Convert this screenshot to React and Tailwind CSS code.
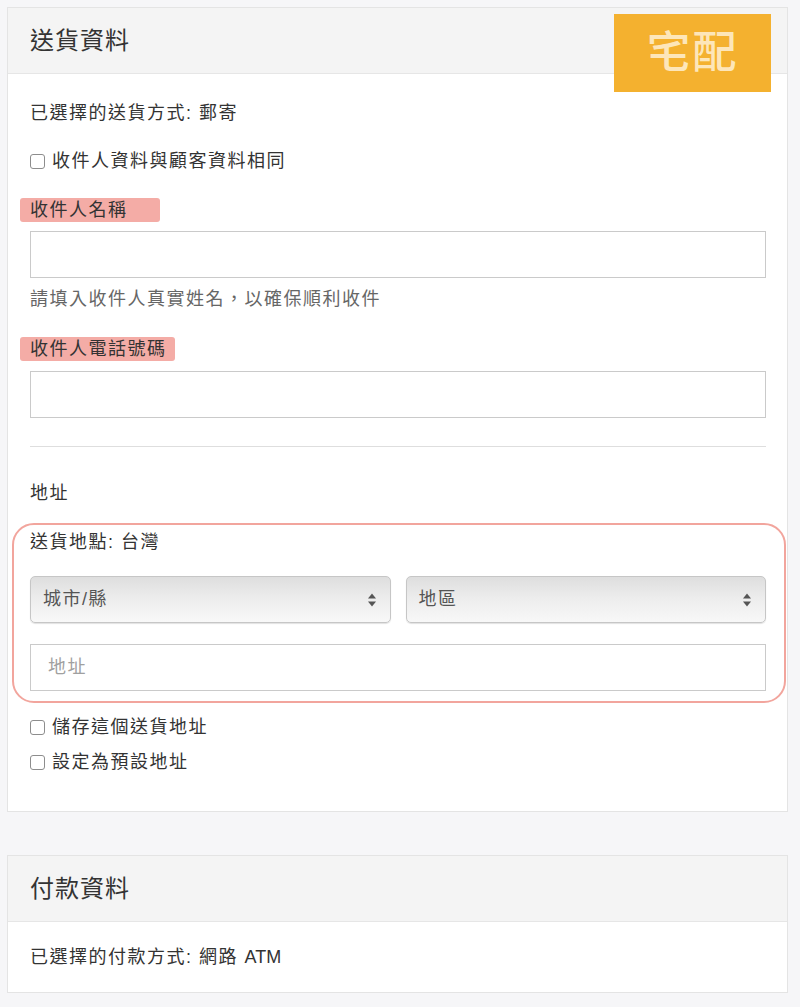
import React from 'react';

const font = "font-['Liberation_Sans','Noto_Sans_CJK_TC',sans-serif]";

const Checkbox = ({ label, className = '' }) => (
    <label className={`flex items-center h-[27px] ${className}`}>
        <span className="w-[15px] h-[15px] rounded-[3px] border border-[#8d8d8d] bg-white shrink-0" />
        <span className="ml-[7px] text-[18px] tracking-[1.5px] text-[#333]">{label}</span>
    </label>
);

// brush-stroke style marker behind the label
const Highlight = ({ children, className = '', pad = 'pr-[12px]' }) => (
    <div className={`h-[27px] flex items-center ${className}`}>
        <span className={`inline-block -ml-[10px] pl-[10px] ${pad} h-[24px] leading-[24px] bg-[#f4aca6] rounded-[3px] text-[18px] tracking-[1.5px] text-[#333]`}>
            {children}
        </span>
    </div>
);

const SelectArrows = () => (
    <svg width="10" height="16" viewBox="0 0 10 16" className="shrink-0">
        <path d="M5 1.5 L9 6.5 H1 Z" fill="#555" />
        <path d="M5 14.5 L9 9.5 H1 Z" fill="#555" />
    </svg>
);

const FakeSelect = ({ value }) => (
    <div className="h-[47px] flex items-center justify-between pl-[12px] pr-[13px] rounded-[5px] border border-[#c6c6c6] bg-[linear-gradient(to_bottom,#dedede,#ececec_45%,#f8f8f8)] shadow-[0_1px_1px_rgba(0,0,0,0.12)]">
        <span className="text-[18px] tracking-[1.5px] text-[#555]">{value}</span>
        <SelectArrows />
    </div>
);

export default function App() {
    return (
        <div className={`min-h-[1007px] w-[800px] bg-[#f6f6f8] pt-[7px] pl-[7px] pr-[12px] ${font}`}>
            {/* 送貨資料 */}
            <div className="relative border border-[#e4e4e4] bg-white">
                <div className="h-[66px] bg-[#f4f4f4] border-b border-[#e6e6e6] flex items-center pl-[22px]">
                    <h2 className="text-[24px] tracking-[1px] text-[#333]">送貨資料</h2>
                </div>
                <div className="absolute top-[6px] left-[606px] w-[157px] h-[78px] bg-[#f4b12f] flex items-center justify-center">
                    <span className="text-[44px] font-medium tracking-[2px] text-[#fde6b9] leading-none">宅配</span>
                </div>

                <div className="pt-[26px] pl-[22px] pr-[21px] pb-[35px]">
                    <div className="text-[18px] leading-[27px] tracking-[1.5px] text-[#333]">已選擇的送貨方式: 郵寄</div>
                    <Checkbox label="收件人資料與顧客資料相同" className="mt-[21px]" />

                    <Highlight className="mt-[21px]" pad="pr-[32px]">收件人名稱</Highlight>
                    <div className="mt-[8px] h-[47px] border border-[#cacaca] bg-white" />
                    <div className="mt-[8px] text-[18px] leading-[27px] tracking-[1.5px] text-[#666]">請填入收件人真實姓名，以確保順利收件</div>

                    <Highlight className="mt-[22px]" pad="pr-[8px]">收件人電話號碼</Highlight>
                    <div className="mt-[9px] h-[47px] border border-[#cacaca] bg-white" />

                    <div className="mt-[28px] h-px bg-[#dedede]" />

                    <div className="mt-[33px] text-[18px] leading-[27px] tracking-[1.5px] text-[#333]">地址</div>

                    <div className="mt-[16px] -ml-[18px] -mr-[20px] border-2 border-[#f2a59d] rounded-[22px] pt-[4px] pl-[16px] pr-[18px] pb-[10px]">
                        <div className="text-[18px] leading-[27px] tracking-[1.5px] text-[#333]">送貨地點: 台灣</div>
                        <div className="mt-[20px] grid grid-cols-2 gap-[15px]">
                            <FakeSelect value="城市/縣" />
                            <FakeSelect value="地區" />
                        </div>
                        <div className="mt-[21px] h-[47px] border border-[#cacaca] bg-white flex items-center pl-[17px]">
                            <span className="text-[18px] tracking-[1.5px] text-[#a0a0a0]">地址</span>
                        </div>
                    </div>

                    <Checkbox label="儲存這個送貨地址" className="mt-[11px]" />
                    <Checkbox label="設定為預設地址" className="mt-[8px]" />
                </div>
            </div>

            {/* 付款資料 */}
            <div className="mt-[43px] border border-[#e4e4e4] bg-white">
                <div className="h-[66px] bg-[#f4f4f4] border-b border-[#e6e6e6] flex items-center pl-[22px]">
                    <h2 className="text-[24px] tracking-[1px] text-[#333]">付款資料</h2>
                </div>
                <div className="h-[70px] flex items-center pl-[22px]">
                    <div className="text-[18px] leading-[27px] tracking-[1.5px] text-[#333]">
                        已選擇的付款方式: 網路 <span className="tracking-normal">ATM</span>
                    </div>
                </div>
            </div>
        </div>
    );
}
